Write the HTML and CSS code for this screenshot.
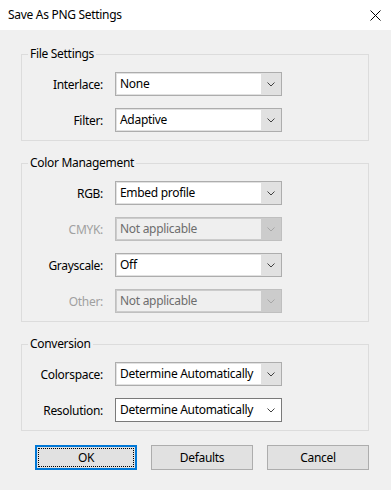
FILE: index.html
```html
<!DOCTYPE html>
<html lang="en">
<head>
  <meta charset="UTF-8">
  <meta name="viewport" content="width=device-width, initial-scale=1.0">
  <title>Save As PNG Settings</title>
  <link rel="stylesheet" href="styles.css">
</head>
<body>
  <div class="dialog">
    <header class="titlebar">
      <span class="title">Save As PNG Settings</span>
      <span class="close">
        <svg width="11" height="11" viewBox="0 0 11 11"><path d="M0.5 0.5 L10.5 10.5 M10.5 0.5 L0.5 10.5" stroke="#000" stroke-width="1" fill="none"/></svg>
      </span>
    </header>

    <div class="content">
      <fieldset class="group">
        <legend>File Settings</legend>
        <div class="rows">
          <span class="row-label">Interlace:</span>
          <div class="combo"><span class="combo-value">None</span><span class="combo-arrow"><svg width="8" height="5" viewBox="0 0 8 5"><path d="M0.5 0.5 L4 4 L7.5 0.5" stroke="currentColor" fill="none"/></svg></span></div>
          <span class="row-label">Filter:</span>
          <div class="combo"><span class="combo-value">Adaptive</span><span class="combo-arrow"><svg width="8" height="5" viewBox="0 0 8 5"><path d="M0.5 0.5 L4 4 L7.5 0.5" stroke="currentColor" fill="none"/></svg></span></div>
        </div>
      </fieldset>

      <fieldset class="group">
        <legend>Color Management</legend>
        <div class="rows">
          <span class="row-label">RGB:</span>
          <div class="combo"><span class="combo-value">Embed profile</span><span class="combo-arrow"><svg width="8" height="5" viewBox="0 0 8 5"><path d="M0.5 0.5 L4 4 L7.5 0.5" stroke="currentColor" fill="none"/></svg></span></div>
          <span class="row-label disabled">CMYK:</span>
          <div class="combo disabled"><span class="combo-value">Not applicable</span><span class="combo-arrow"><svg width="8" height="5" viewBox="0 0 8 5"><path d="M0.5 0.5 L4 4 L7.5 0.5" stroke="currentColor" fill="none"/></svg></span></div>
          <span class="row-label">Grayscale:</span>
          <div class="combo"><span class="combo-value">Off</span><span class="combo-arrow"><svg width="8" height="5" viewBox="0 0 8 5"><path d="M0.5 0.5 L4 4 L7.5 0.5" stroke="currentColor" fill="none"/></svg></span></div>
          <span class="row-label disabled">Other:</span>
          <div class="combo disabled"><span class="combo-value">Not applicable</span><span class="combo-arrow"><svg width="8" height="5" viewBox="0 0 8 5"><path d="M0.5 0.5 L4 4 L7.5 0.5" stroke="currentColor" fill="none"/></svg></span></div>
        </div>
      </fieldset>

      <fieldset class="group">
        <legend>Conversion</legend>
        <div class="rows">
          <span class="row-label">Colorspace:</span>
          <div class="combo"><span class="combo-value">Determine Automatically</span><span class="combo-arrow"><svg width="8" height="5" viewBox="0 0 8 5"><path d="M0.5 0.5 L4 4 L7.5 0.5" stroke="currentColor" fill="none"/></svg></span></div>
          <span class="row-label">Resolution:</span>
          <div class="combo hover"><span class="combo-value">Determine Automatically</span><span class="combo-arrow"><svg width="8" height="5" viewBox="0 0 8 5"><path d="M0.5 0.5 L4 4 L7.5 0.5" stroke="currentColor" fill="none"/></svg></span></div>
        </div>
      </fieldset>

      <div class="buttons">
        <button class="button default"><span class="focus-ring">OK</span></button>
        <button class="button">Defaults</button>
        <button class="button">Cancel</button>
      </div>
    </div>
  </div>
</body>
</html>
```

FILE: styles.css
```css
:root {
  --bg-dialog: #F0F0F0;
  --bg-control: #E1E1E1;
  --border-control: #ADADAD;
  --border-group: #DCDCDC;
  --text: #000000;
  --text-disabled: #A0A0A0;
  --accent: #0078D7;
}

* {
  margin: 0;
  padding: 0;
  box-sizing: border-box;
}

body {
  font-family: "Noto Sans", "Liberation Sans", sans-serif;
  font-size: 12px;
  letter-spacing: -0.3px;
  color: var(--text);
  background: var(--bg-dialog);
}

.dialog {
  width: 391px;
  height: 490px;
  display: flex;
  flex-direction: column;
  background: var(--bg-dialog);
}

.titlebar {
  height: 30px;
  background: #FFFFFF;
  display: flex;
  align-items: center;
  justify-content: space-between;
  padding: 0 10px 0 8px;
}

.title {
  line-height: 16px;
}

.close {
  display: flex;
  width: 11px;
  height: 11px;
}

.content {
  padding: 16px 22px 0 21px;
  display: flex;
  flex-direction: column;
  gap: 14px;
}

.group {
  border: 1px solid var(--border-group);
  width: 348px;
  padding: 0 0 8px;
}

.group legend {
  margin-left: 6px;
  padding: 0 2px;
  line-height: 16px;
}

.rows {
  display: grid;
  grid-template-columns: 81px 167px;
  column-gap: 12px;
  row-gap: 12px;
  align-items: center;
  padding-top: 10px;
}

.row-label {
  text-align: right;
}

.row-label.disabled {
  color: var(--text-disabled);
}

.combo {
  height: 24px;
  display: flex;
  border: 1px solid var(--border-control);
  background: var(--bg-control);
  padding: 1px;
}

.combo-value {
  flex: 1;
  background: #FFFFFF;
  padding: 0 0 0 3px;
  line-height: 20px;
  white-space: nowrap;
  overflow: hidden;
}

.combo-arrow {
  width: 19px;
  display: flex;
  align-items: center;
  justify-content: center;
  color: #404040;
}

.combo.disabled {
  border-color: #BFBFBF;
  background: #CCCCCC;
}

.combo.disabled .combo-value {
  background: #EFEFEF;
  color: #6D6D6D;
}

.combo.disabled .combo-arrow {
  color: #A6A6A6;
}

.combo.hover {
  border-color: #7A7A7A;
  background: #FFFFFF;
}

.buttons {
  display: flex;
  justify-content: flex-end;
  gap: 14px;
}

.button {
  width: 102px;
  height: 25px;
  font: inherit;
  letter-spacing: inherit;
  color: var(--text);
  background: var(--bg-control);
  border: 1px solid var(--border-control);
}

.button.default {
  border: 2px solid var(--accent);
  padding: 1px;
  display: flex;
}

.focus-ring {
  flex: 1;
  display: flex;
  align-items: center;
  justify-content: center;
  border: 1px dotted #000;
}
```
